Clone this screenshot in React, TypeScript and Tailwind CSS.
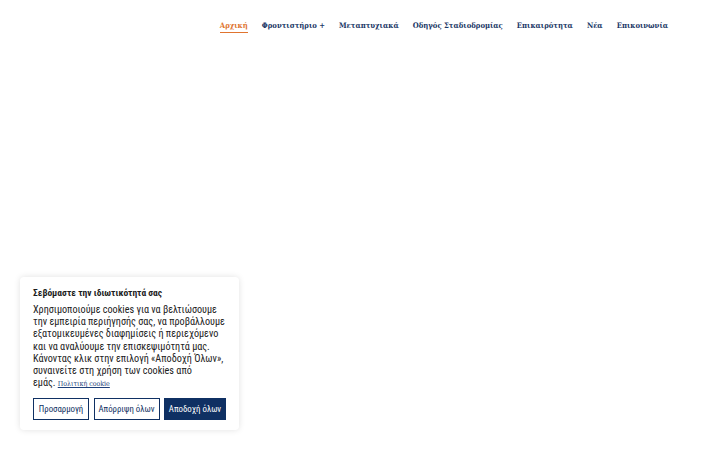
import React from 'react';

const navItems = [
  { label: 'Αρχική', active: true },
  { label: 'Φροντιστήριο +' },
  { label: 'Μεταπτυχιακά' },
  { label: 'Οδηγός Σταδιοδρομίας' },
  { label: 'Επικαιρότητα' },
  { label: 'Νέα' },
  { label: 'Επικοινωνία' },
];

const bodyLines = [
  'Χρησιμοποιούμε cookies για να βελτιώσουμε',
  'την εμπειρία περιήγησής σας, να προβάλλουμε',
  'εξατομικευμένες διαφημίσεις ή περιεχόμενο',
  'και να αναλύουμε την επισκεψιμότητά μας.',
  'Κάνοντας κλικ στην επιλογή «Αποδοχή Όλων»,',
  'συναινείτε στη χρήση των cookies από',
];

function Header() {
  return (
    <header className="flex justify-end pr-[52px] pt-[20px]">
      <nav className="flex items-start gap-[14px] font-['DejaVu_Serif',serif] [font-stretch:condensed] text-[7.65px] font-semibold leading-[12px]">
        {navItems.map((item) => (
          <a
            key={item.label}
            href="#"
            className={
              item.active
                ? 'border-b-[1.5px] border-[#e0742f] text-[#e0742f]'
                : 'text-[#1a3766]'
            }
          >
            {item.label}
          </a>
        ))}
      </nav>
    </header>
  );
}

function CookieBanner() {
  return (
    <div className="absolute left-[20px] top-[277px] w-[219px] rounded-[4px] bg-white px-[13px] pb-[10px] pt-[9px] shadow-[0_0_6px_rgba(0,0,0,0.12)] font-['Roboto',sans-serif] [font-stretch:condensed]">
      <h2 className="text-[9.5px] font-bold leading-[14px] text-[#1c1c1c]">
        Σεβόμαστε την ιδιωτικότητά σας
      </h2>
      <p className="mt-[4px] whitespace-nowrap text-[10.2px] leading-[12.2px] text-[#222]">
        {bodyLines.map((line) => (
          <React.Fragment key={line}>
            {line}
            <br />
          </React.Fragment>
        ))}
        εμάς.{' '}
        <a
          href="#"
          className="font-['DejaVu_Serif',serif] text-[7px] text-[#1d3f7a] underline"
        >
          Πολιτική cookie
        </a>
      </p>
      <div className="mt-[8px] flex gap-[4.5px]">
        <button className="h-[22px] w-[56px] border-[1.5px] border-[#0f3063] text-[8.8px] text-[#0f3063]">
          Προσαρμογή
        </button>
        <button className="h-[22px] w-[66px] border-[1.5px] border-[#0f3063] text-[8.8px] text-[#0f3063]">
          Απόρριψη όλων
        </button>
        <button className="h-[22px] w-[62px] border-[1.5px] border-[#0f3063] bg-[#0f3063] text-[8.8px] text-white">
          Αποδοχή όλων
        </button>
      </div>
    </div>
  );
}

export default function App() {
  return (
    <div className="relative h-[450px] w-[720px] overflow-hidden bg-white">
      <Header />
      <CookieBanner />
    </div>
  );
}
